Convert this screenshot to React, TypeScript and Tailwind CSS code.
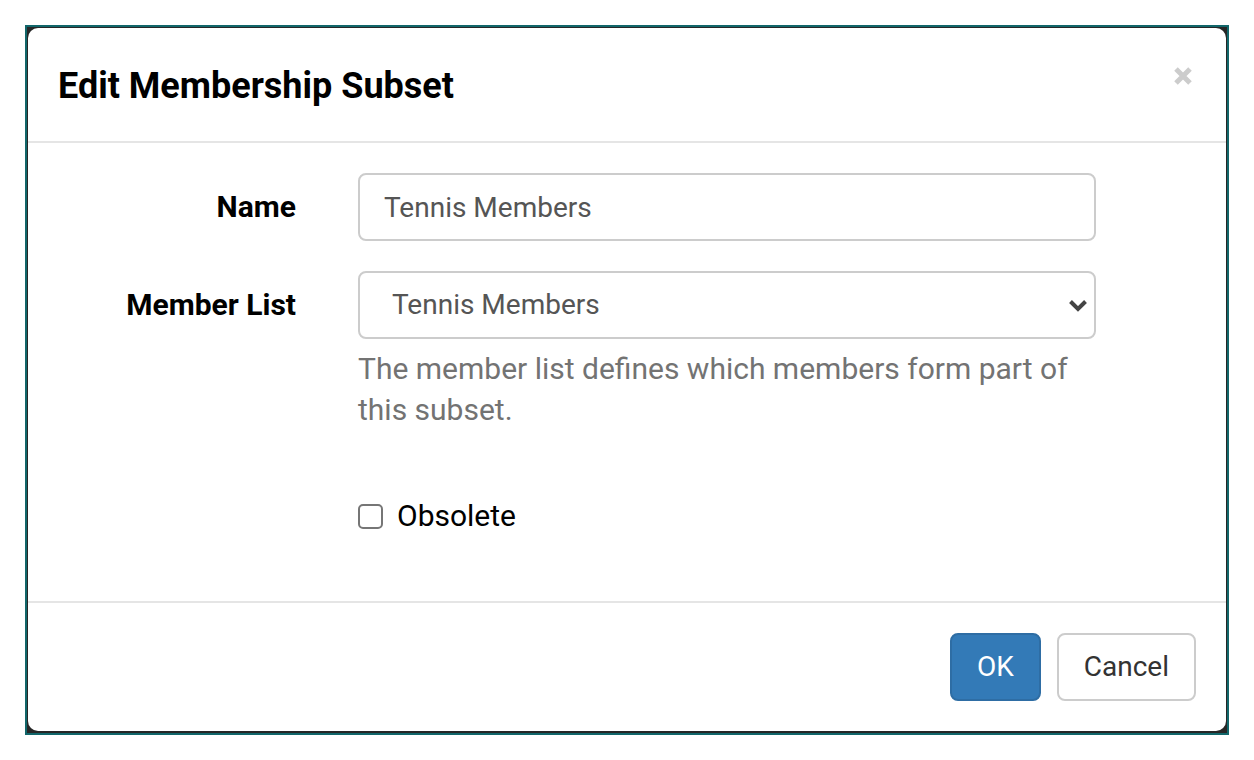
import { useState } from 'react';

const font = { fontFamily: "Roboto, 'Liberation Sans', Arial, sans-serif" };

export default function App() {
  const [name, setName] = useState('Tennis Members');
  const [list, setList] = useState('Tennis Members');
  const [obsolete, setObsolete] = useState(false);

  return (
    <div className="w-[1254px] h-[760px] bg-white pt-[25px] pl-[25px]" style={font}>
      {/* Backdrop frame */}
      <div className="w-[1204px] h-[710px] border-2 border-[#11666a] bg-[#262626] pt-[1px] pl-[1px]">
        {/* Modal */}
        <div className="w-[1198px] h-[703px] bg-white rounded-[10px] flex flex-col overflow-hidden">

          {/* Header */}
          <div className="h-[115px] shrink-0 border-b-2 border-[#e5e5e5] flex flex-row justify-between items-start px-[30px] pt-[32px]">
            <h4 className="text-[36px] leading-[53px] font-bold text-black">Edit Membership Subset</h4>
            <button className="mt-[6px] mr-[3px] w-[20px] h-[20px]" aria-label="Close">
              <svg width="20" height="20" viewBox="0 0 20 20">
                <path d="M3 3 L17 17 M17 3 L3 17" stroke="#cccccc" strokeWidth="5" strokeLinecap="butt" fill="none" />
              </svg>
            </button>
          </div>

          {/* Body */}
          <div className="flex-1 pt-[30px] flex flex-col">

            {/* Name */}
            <div className="flex flex-row mb-[30px]">
              <label className="w-[299px] pr-[31px] pt-[14px] text-right text-[30px] leading-[40px] font-bold text-black">
                Name
              </label>
              <div className="w-[799px] pl-[31px] pr-[30px]">
                <input
                  value={name}
                  onChange={(e) => setName(e.target.value)}
                  className="w-full h-[68px] border-2 border-[#cccccc] rounded-[8px] px-[24px] text-[28px] leading-[40px] text-[#555555] outline-none"
                />
              </div>
            </div>

            {/* Member List */}
            <div className="flex flex-row mb-[30px]">
              <label className="w-[299px] pr-[31px] pt-[14px] text-right text-[30px] leading-[40px] font-bold text-black">
                Member List
              </label>
              <div className="w-[799px] pl-[31px] pr-[30px]">
                <div className="relative">
                  <select
                    value={list}
                    onChange={(e) => setList(e.target.value)}
                    className="appearance-none w-full h-[68px] border-2 border-[#cccccc] rounded-[8px] pl-[32px] pr-[50px] text-[28px] leading-[40px] text-[#555555] bg-white outline-none"
                  >
                    <option>Tennis Members</option>
                    <option>Golf Members</option>
                    <option>All Members</option>
                  </select>
                  <svg className="absolute right-[8px] top-[28px] pointer-events-none" width="20" height="14" viewBox="0 0 20 14">
                    <path d="M2.5 2.5 L10 10 L17.5 2.5" stroke="#444444" strokeWidth="4" fill="none" />
                  </svg>
                </div>
                <p className="mt-[9px] text-[30px] leading-[41px] text-[#737373]">
                  The member list defines which members form part of this subset.
                </p>
              </div>
            </div>

            {/* Obsolete */}
            <div className="flex flex-row mt-[36px]">
              <div className="w-[299px]" />
              <label className="pl-[31px] flex flex-row items-center gap-[14px] text-[30px] leading-[40px] text-black cursor-pointer">
                <input
                  type="checkbox"
                  checked={obsolete}
                  onChange={(e) => setObsolete(e.target.checked)}
                  className="appearance-none w-[25px] h-[25px] border-2 border-[#767676] rounded-[5px] bg-white checked:bg-[#337ab7]"
                />
                Obsolete
              </label>
            </div>
          </div>

          {/* Footer */}
          <div className="shrink-0 border-t-2 border-[#e5e5e5] px-[30px] py-[30px] flex flex-row justify-end gap-[16px]">
            <button className="h-[68px] px-[25px] rounded-[8px] border-2 border-[#2e6da4] bg-[#337ab7] text-white text-[28px] leading-[40px]">
              OK
            </button>
            <button className="h-[68px] px-[25px] rounded-[8px] border-2 border-[#cccccc] bg-white text-[#333333] text-[28px] leading-[40px]">
              Cancel
            </button>
          </div>

        </div>
      </div>
    </div>
  );
}
